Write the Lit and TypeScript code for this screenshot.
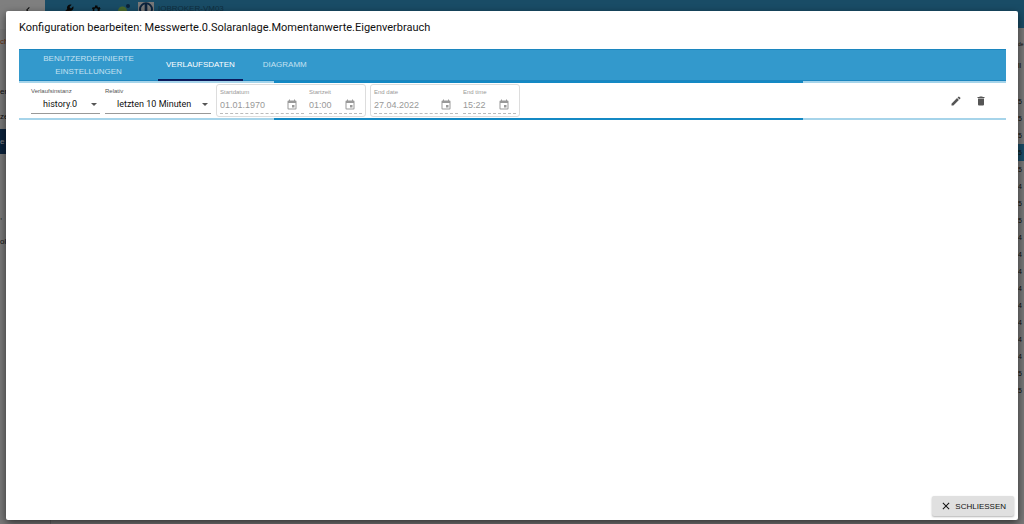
import { LitElement, html, css, svg } from "lit";
import { customElement, property } from "lit/decorators.js";

const icons: Record<string, unknown> = {
  edit: svg`<path d="M3 17.25V21h3.75L17.81 9.94l-3.75-3.75L3 17.25zM20.71 7.04a1 1 0 0 0 0-1.41l-2.34-2.34a1 1 0 0 0-1.41 0l-1.83 1.83 3.75 3.75 1.83-1.83z"/>`,
  trash: svg`<path d="M6 19a2 2 0 0 0 2 2h8a2 2 0 0 0 2-2V7H6v12zM19 4h-3.5l-1-1h-5l-1 1H5v2h14V4z"/>`,
  close: svg`<path d="M19 6.41 17.59 5 12 10.59 6.41 5 5 6.41 10.59 12 5 17.59 6.41 19 12 13.41 17.59 19 19 17.59 13.41 12z"/>`,
  event: svg`<path d="M17 12h-5v5h5v-5zM16 1v2H8V1H6v2H5a2 2 0 0 0-2 2v14a2 2 0 0 0 2 2h14a2 2 0 0 0 2-2V5a2 2 0 0 0-2-2h-1V1h-2zm3 18H5V8h14v11z"/>`,
  chevron: svg`<path d="M15.41 7.41 14 6l-6 6 6 6 1.41-1.41L10.83 12z"/>`,
  wrench: svg`<path d="m22.7 19-9.1-9.1c.9-2.3.4-5-1.5-6.9-2-2-5-2.4-7.4-1.3L9 6 6 9 1.6 4.7C.4 7.1.9 10.1 2.9 12.1c1.9 1.9 4.6 2.4 6.9 1.5l9.1 9.1c.4.4 1 .4 1.4 0l2.3-2.3c.5-.4.5-1.1.1-1.4z" transform="matrix(-1 0 0 1 24 0)"/>`,
  gear: svg`<path d="M19.14 12.94a7 7 0 0 0 0-1.88l2.03-1.58-1.92-3.32-2.39.96a7 7 0 0 0-1.62-.94L14.88 3h-4.76l-.36 3.18a7 7 0 0 0-1.62.94l-2.39-.96-1.92 3.32 2.03 1.58a7 7 0 0 0 0 1.88l-2.03 1.58 1.92 3.32 2.39-.96c.5.38 1.03.7 1.62.94l.36 3.18h4.76l.36-3.18a7 7 0 0 0 1.62-.94l2.39.96 1.92-3.32zM12 15.6a3.6 3.6 0 1 1 0-7.2 3.6 3.6 0 0 1 0 7.2z"/>`,
};

const icon = (name: string) =>
  html`<svg class="icon" viewBox="0 0 24 24" aria-hidden="true">${icons[name]}</svg>`;

@customElement("busy-bar")
class BusyBar extends LitElement {
  static styles = css`
    :host { display: grid; grid-template-columns: 255fr 529fr 203fr; height: 2px; background: #a6d4ea; }
    .bar { grid-column: 2; background: #1489c4; }
  `;
  render() {
    return html`<div class="bar"></div>`;
  }
}

@customElement("page-behind")
class PageBehind extends LitElement {
  static styles = css`
    :host { display: flex; height: 100%; overflow: hidden; background: #f2f2f2; font-size: 8px; color: #222; }
    .side { width: 50px; flex: none; border-right: 1px solid #ccc; }
    .fold { height: 29px; width: 45px; display: flex; justify-content: center; background: #fff; }
    .fold .icon { margin-left: 10px; }
    .entry { height: 25px; line-height: 25px; white-space: nowrap; }
    .entry.warn { color: #c65a1a; }
    .entry.active { background: #164477; color: #fff; }
    .main { flex: 1; display: flex; flex-direction: column; }
    .top { height: 28px; flex: none; margin-left: -6px; padding-left: 17px; display: flex; align-items: flex-start; gap: 8px; background: #3399cc; }
    .quick { display: flex; gap: 16px; }
    .icon { width: 12px; height: 12px; margin-top: 4px; fill: #111; }
    .host { display: flex; gap: 4px; line-height: 18px; color: #1f5f84; }
    .plug { width: 16px; height: 16px; }
    .values { align-self: flex-end; width: 6px; padding-top: 8px; font-size: 7px; line-height: 17px; }
    .values div { height: 17px; }
    .values .head { font-size: 5px; }
    .values .filter { height: 20px; margin-top: 3px; line-height: 20px; }
    .values .on { background: #3399cc; }
  `;
  render() {
    const entries = ["ch", "", "er", "ze", "e", "", "", ",", "ol"];
    const values = ["", "5", "5", "5", "5", "5", "4", "5", "5", "4", "4", "4", "4", "4", "4", "4", "4", "5", "5"];
    return html`
      <div class="side">
        <div class="fold">${icon("chevron")}</div>
        ${entries.map((t, i) => html`<div class="entry ${i === 0 ? "warn" : i === 4 ? "active" : ""}">${t}</div>`)}
      </div>
      <div class="main">
        <div class="top">
          <div class="quick">
            ${icon("wrench")}${icon("gear")}
            <svg class="icon" viewBox="0 0 24 24" aria-hidden="true">
              <circle cx="9" cy="14" r="9" fill="#8fd05a"/><circle cx="20" cy="4" r="4" fill="#164477"/>
            </svg>
          </div>
          <div class="host">
            <svg class="plug" viewBox="0 0 24 24" aria-hidden="true">
              <path d="M0 3h24v21H0z" fill="#eee"/><circle cx="12" cy="14" r="9" fill="none" stroke="#164477" stroke-width="3"/><path d="M10 6h4v16h-4z" fill="#164477"/>
            </svg>
            <span>IOBROKER-VM03</span>
          </div>
        </div>
        <div class="values">
          <div class="head">de</div>
          <div class="filter">ll</div>
          ${values.map((t, i) => html`<div class=${i === 4 ? "on" : ""}>${t}</div>`)}
        </div>
      </div>`;
  }
}

@customElement("date-field")
class DateField extends LitElement {
  @property() label = "";
  @property() value = "";
  @property({ type: Boolean }) time = false;
  static styles = css`
    :host { display: block; width: 84px; color: #999; }
    :host([time]) { width: 53px; }
    label { display: block; font-size: 6px; line-height: 8px; white-space: nowrap; }
    .line { display: flex; align-items: center; height: 17px; border-bottom: 1px dashed #bbb; }
    input { flex: 1; min-width: 0; padding: 0; border: 0; background: none; color: inherit; font: 9px "Liberation Sans", Arial, sans-serif; }
    .icon { width: 12px; height: 12px; margin-right: 6px; fill: #999; }
  `;
  render() {
    return html`
      <label for="f">${this.label}</label>
      <div class="line"><input id="f" disabled .value=${this.value} />${icon("event")}</div>`;
  }
}

@customElement("app-root")
class AppRoot extends LitElement {
  static styles = css`
    :host { display: block; position: relative; height: 100vh; overflow: hidden; font-family: "Liberation Sans", Arial, sans-serif; color: #111; }
    .backdrop { position: absolute; inset: 0; background: rgba(0, 0, 0, 0.5); }
    .dialog { position: absolute; inset: 11px 6px 4px 6px; display: flex; flex-direction: column; background: #fff; border-radius: 2px; box-shadow: 0 3px 8px rgba(0, 0, 0, 0.6); }
    h1 { margin: 0; padding: 9px 13px 13px; font: 400 11px/16px Roboto, sans-serif; }
    .content { flex: 1; margin: 0 12px 0 13px; }
    .tabs { display: flex; height: 32px; box-sizing: border-box; background: #3399cc; border-top: 1px solid #1c86bf; border-bottom: 1px solid #1c86bf; }
    .tab { padding: 0 14px; border: 0; border-bottom: 2px solid transparent; margin-bottom: -1px; background: none; color: #c4e1f1; font: 8px/13px "Liberation Sans", Arial, sans-serif; text-transform: uppercase; }
    .tab.wide { width: 139px; }
    .tab.current { color: #fff; border-bottom-color: #0b1a5c; padding: 0 8px; }
    .tab.last { margin-left: 6px; }
    .toolbar { display: flex; align-items: center; height: 35px; padding-left: 12px; }
    .field { margin-right: 5px; }
    .field label { display: block; font-size: 6px; line-height: 8px; color: #555; }
    .pick { position: relative; display: flex; align-items: center; border-bottom: 1px solid #999; }
    .pick select { appearance: none; width: 69px; height: 18px; padding: 0 12px; border: 0; border-radius: 0; background: none; color: #111; font: 9px Roboto, sans-serif; }
    .pick.long select { width: 106px; }
    .arrow { position: absolute; right: 3px; width: 6px; height: 3px; fill: #555; pointer-events: none; }
    .range { display: flex; gap: 5px; height: 33px; box-sizing: border-box; margin-right: 4px; padding: 3px 3px 0; border: 1px solid #ddd; border-radius: 3px; }
    .tools { display: flex; gap: 13px; margin-left: auto; padding-right: 19px; }
    .tools button { display: flex; padding: 0; border: 0; background: none; }
    .icon { width: 12px; height: 12px; fill: #555; }
    .actions { display: flex; justify-content: flex-end; padding: 0 4px 4px; }
    .close { display: flex; align-items: center; gap: 3px; height: 20px; padding: 0 8px; border: 0; border-radius: 2px; background: #e0e0e0; color: #111; font: 8px "Liberation Sans", Arial, sans-serif; text-transform: uppercase; box-shadow: 0 1px 2px rgba(0, 0, 0, 0.3); }
    .close .icon { fill: #111; }
  `;
  render() {
    return html`
      <page-behind></page-behind>
      <div class="backdrop"></div>
      <section class="dialog" role="dialog" aria-labelledby="title">
        <h1 id="title">Konfiguration bearbeiten: Messwerte.0.Solaranlage.Momentanwerte.Eigenverbrauch</h1>
        <div class="content">
          <div class="tabs" role="tablist">
            <button class="tab wide" role="tab">Benutzerdefinierte Einstellungen</button>
            <button class="tab current" role="tab" aria-selected="true">Verlaufsdaten</button>
            <button class="tab last" role="tab">Diagramm</button>
          </div>
          <busy-bar></busy-bar>
          <div class="toolbar">
            <div class="field">
              <label for="instance">Verlaufsinstanz</label>
              <div class="pick">
                <select id="instance"><option>history.0</option></select>
                <svg class="arrow" viewBox="0 0 10 5"><path d="M0 0h10L5 5z"/></svg>
              </div>
            </div>
            <div class="field">
              <label for="relative">Relativ</label>
              <div class="pick long">
                <select id="relative"><option>letzten 10 Minuten</option></select>
                <svg class="arrow" viewBox="0 0 10 5"><path d="M0 0h10L5 5z"/></svg>
              </div>
            </div>
            <div class="range">
              <date-field label="Startdatum" value="01.01.1970"></date-field>
              <date-field time label="Startzeit" value="01:00"></date-field>
            </div>
            <div class="range">
              <date-field label="End date" value="27.04.2022"></date-field>
              <date-field time label="End time" value="15:22"></date-field>
            </div>
            <div class="tools">
              <button aria-label="Bearbeiten">${icon("edit")}</button>
              <button aria-label="Löschen">${icon("trash")}</button>
            </div>
          </div>
          <busy-bar></busy-bar>
        </div>
        <div class="actions"><button class="close">${icon("close")}Schliessen</button></div>
      </section>`;
  }
}
